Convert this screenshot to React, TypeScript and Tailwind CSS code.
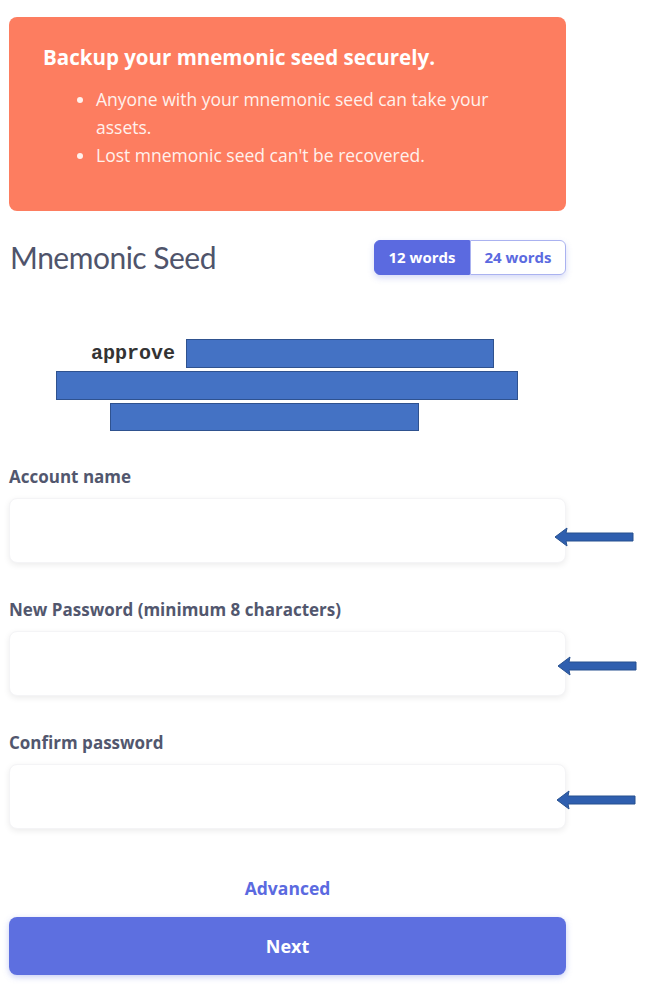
import { useState } from "react";

function Arrow() {
  return (
    <svg width="80" height="20" viewBox="0 0 80 20" className="block">
      <polygon
        points="0,10 12,1 11,6 78,6 78,14 11,14 12,19"
        fill="#2F5FAF"
        stroke="#27508f"
        strokeWidth="1"
        strokeLinejoin="round"
      />
    </svg>
  );
}

function Field({ label, arrowPos }: { label: string; arrowPos: string }) {
  return (
    <div className="flex flex-col">
      <label className="text-[17px] font-bold text-[#52576e] leading-6 mb-[9px]">{label}</label>
      <div className="relative">
        <input className="w-full h-[65px] rounded-lg bg-white shadow-[0_2px_6px_rgba(0,0,0,0.08)] border border-[#f4f4f6] outline-none px-4" />
        <div className={`absolute ${arrowPos}`}>
          <Arrow />
        </div>
      </div>
    </div>
  );
}

export default function App() {
  const [words, setWords] = useState<12 | 24>(12);

  return (
    <div className="min-h-[992px] bg-white font-['Open_Sans','Noto_Sans',sans-serif]">
      <div className="ml-[9px] w-[557px] pt-[17px] flex flex-col">
        {/* Warning card */}
        <div className="bg-[#fd7d60] rounded-lg h-[194px] pl-[34px] pr-6 pt-[26px] text-white">
          <h3 className="text-[20.5px] font-bold leading-7">Backup your mnemonic seed securely.</h3>
          <ul className="list-disc pl-[53px] mt-[14px] text-[17.5px] leading-[28px] text-[#fff1ec]">
            <li className="max-w-[440px]">Anyone with your mnemonic seed can take your assets.</li>
            <li>Lost mnemonic seed can't be recovered.</li>
          </ul>
        </div>

        {/* Header row */}
        <div className="flex items-center justify-between mt-[29px] h-[35px]">
          <h2 className="font-['Lato',sans-serif] text-[30px] font-normal text-[#4f546b] tracking-[-0.5px] pl-px">
            Mnemonic Seed
          </h2>
          <div className="flex h-[35px] rounded-md shadow-[0_3px_6px_rgba(91,106,224,0.25)]">
            <button
              onClick={() => setWords(12)}
              className={`w-[96px] text-[15px] font-bold rounded-l-md border border-[#5b6ae0] ${
                words === 12 ? "bg-[#5b6ae0] text-white" : "bg-white text-[#5b6ae0]"
              }`}
            >
              12 words
            </button>
            <button
              onClick={() => setWords(24)}
              className={`w-[96px] text-[15px] font-bold rounded-r-md border border-[#aab2f0] ${
                words === 24 ? "bg-[#5b6ae0] text-white" : "bg-white text-[#5b6ae0]"
              }`}
            >
              24 words
            </button>
          </div>
        </div>

        {/* Redacted seed */}
        <div className="mt-[64px] h-[93px] flex flex-col gap-[3px]">
          <div className="flex items-center h-[29px]">
            <span className="ml-[82px] w-[95px] font-['Liberation_Mono',monospace] font-bold text-[20px] text-[#333]">
              approve
            </span>
            <div className="w-[308px] h-[29px] bg-[#4472C4] border border-[#2F528F]" />
          </div>
          <div className="ml-[47px] w-[462px] h-[29px] bg-[#4472C4] border border-[#2F528F]" />
          <div className="ml-[101px] w-[309px] h-[28px] bg-[#4472C4] border border-[#2F528F]" />
        </div>

        {/* Form */}
        <div className="mt-[33px] flex flex-col gap-[35px]">
          <Field label="Account name" arrowPos="left-[546px] top-[29px]" />
          <Field label="New Password (minimum 8 characters)" arrowPos="left-[549px] top-[25px]" />
          <Field label="Confirm password" arrowPos="left-[548px] top-[26px]" />
        </div>

        <button className="mt-[47px] self-center text-[17.5px] font-bold text-[#5b6ae0] leading-6">Advanced</button>

        <button className="mt-[17px] h-[58px] rounded-lg bg-[#5d6fe0] text-white text-[18px] font-bold shadow-[0_2px_6px_rgba(93,111,224,0.35)]">
          Next
        </button>
      </div>
    </div>
  );
}
